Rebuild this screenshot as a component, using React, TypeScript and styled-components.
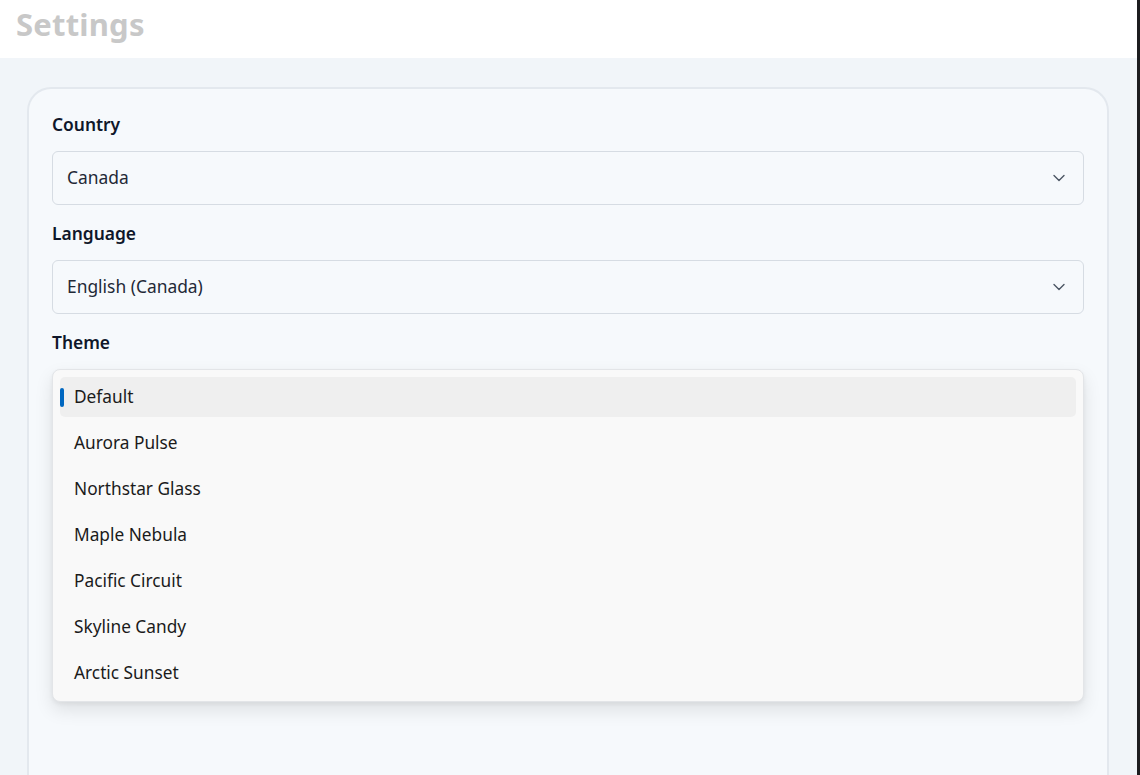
import React from "react";
import styled, { createGlobalStyle } from "styled-components";

const Global = createGlobalStyle`
  html, body { margin: 0; padding: 0; }
  body {
    font-family: "Noto Sans", "Open Sans", sans-serif;
    background: #f1f5f9;
    overflow: hidden;
  }
`;

const Page = styled.div`
  width: 1137px;
  height: 775px;
  display: flex;
  flex-direction: column;
  background: #f1f5f9;
  border-right: 3px solid #1d1d1f;
  overflow: hidden;
`;

const Header = styled.header`
  height: 58px;
  flex: none;
  background: #ffffff;
  display: flex;
  align-items: center;
  padding: 0 16px;
`;

const Title = styled.h1`
  margin: 0;
  margin-top: -10px;
  font-size: 31px;
  font-weight: 700;
  color: #c8c8c8;
  letter-spacing: 0.2px;
`;

const Main = styled.main`
  flex: 1;
  padding: 29px 28px 0 27px;
  display: flex;
  flex-direction: column;
`;

const Card = styled.section`
  flex: 1;
  background: #f6f9fc;
  border: 2px solid #e3e8ee;
  border-bottom: none;
  border-radius: 24px 24px 0 0;
  padding: 23px 23px 0 23px;
  display: flex;
  flex-direction: column;
`;

const Field = styled.div`
  display: flex;
  flex-direction: column;
  margin-bottom: 16px;
`;

const Label = styled.label`
  font-size: 17.4px;
  font-weight: 600;
  color: #0f172a;
  line-height: 24px;
  margin-bottom: 15px;
`;

const Select = styled.div`
  box-sizing: content-box;
  height: 50px;
  border: 1px solid #d6dce3;
  border-radius: 6px;
  background: #f6f9fc;
  display: flex;
  align-items: center;
  justify-content: space-between;
  padding: 0 18px 2px 14px;
  font-size: 17.4px;
  color: #1f2937;
`;

const ListBox = styled.div`
  border: 1px solid #e3e5e8;
  border-radius: 8px;
  background: #f9f9f9;
  box-shadow: 0 8px 18px rgba(0, 0, 0, 0.1), 0 2px 4px rgba(0, 0, 0, 0.05);
  padding: 7px 7px 8px 7px;
  display: flex;
  flex-direction: column;
  gap: 6px;
`;

const Option = styled.div<{ $selected?: boolean }>`
  position: relative;
  height: 40px;
  box-sizing: border-box;
  display: flex;
  align-items: center;
  padding: 0 0 1px 14px;
  border-radius: 5px;
  font-size: 17.3px;
  color: #1b1b1b;
  background: ${(p) => (p.$selected ? "#efefef" : "transparent")};
`;

const Indicator = styled.span`
  position: absolute;
  left: 0;
  top: 11px;
  width: 4px;
  height: 19px;
  border-radius: 2px;
  background: #0067c0;
`;

const Chevron = () => (
  <svg width="12" height="8" viewBox="0 0 12 8" fill="none" style={{ marginTop: 2 }}>
    <path d="M1 1.5L6 6.5L11 1.5" stroke="#4b5563" strokeWidth="1.4" strokeLinecap="round" strokeLinejoin="round" />
  </svg>
);

const themes = [
  "Default",
  "Aurora Pulse",
  "Northstar Glass",
  "Maple Nebula",
  "Pacific Circuit",
  "Skyline Candy",
  "Arctic Sunset",
];

export default function App() {
  return (
    <>
      <Global />
      <Page>
        <Header>
          <Title>Settings</Title>
        </Header>
        <Main>
          <Card>
            <Field>
              <Label>Country</Label>
              <Select>
                <span>Canada</span>
                <Chevron />
              </Select>
            </Field>
            <Field>
              <Label>Language</Label>
              <Select>
                <span>English (Canada)</span>
                <Chevron />
              </Select>
            </Field>
            <Field>
              <Label>Theme</Label>
              <ListBox>
                {themes.map((t, i) => (
                  <Option key={t} $selected={i === 0}>
                    {i === 0 && <Indicator />}
                    {t}
                  </Option>
                ))}
              </ListBox>
            </Field>
          </Card>
        </Main>
      </Page>
    </>
  );
}
